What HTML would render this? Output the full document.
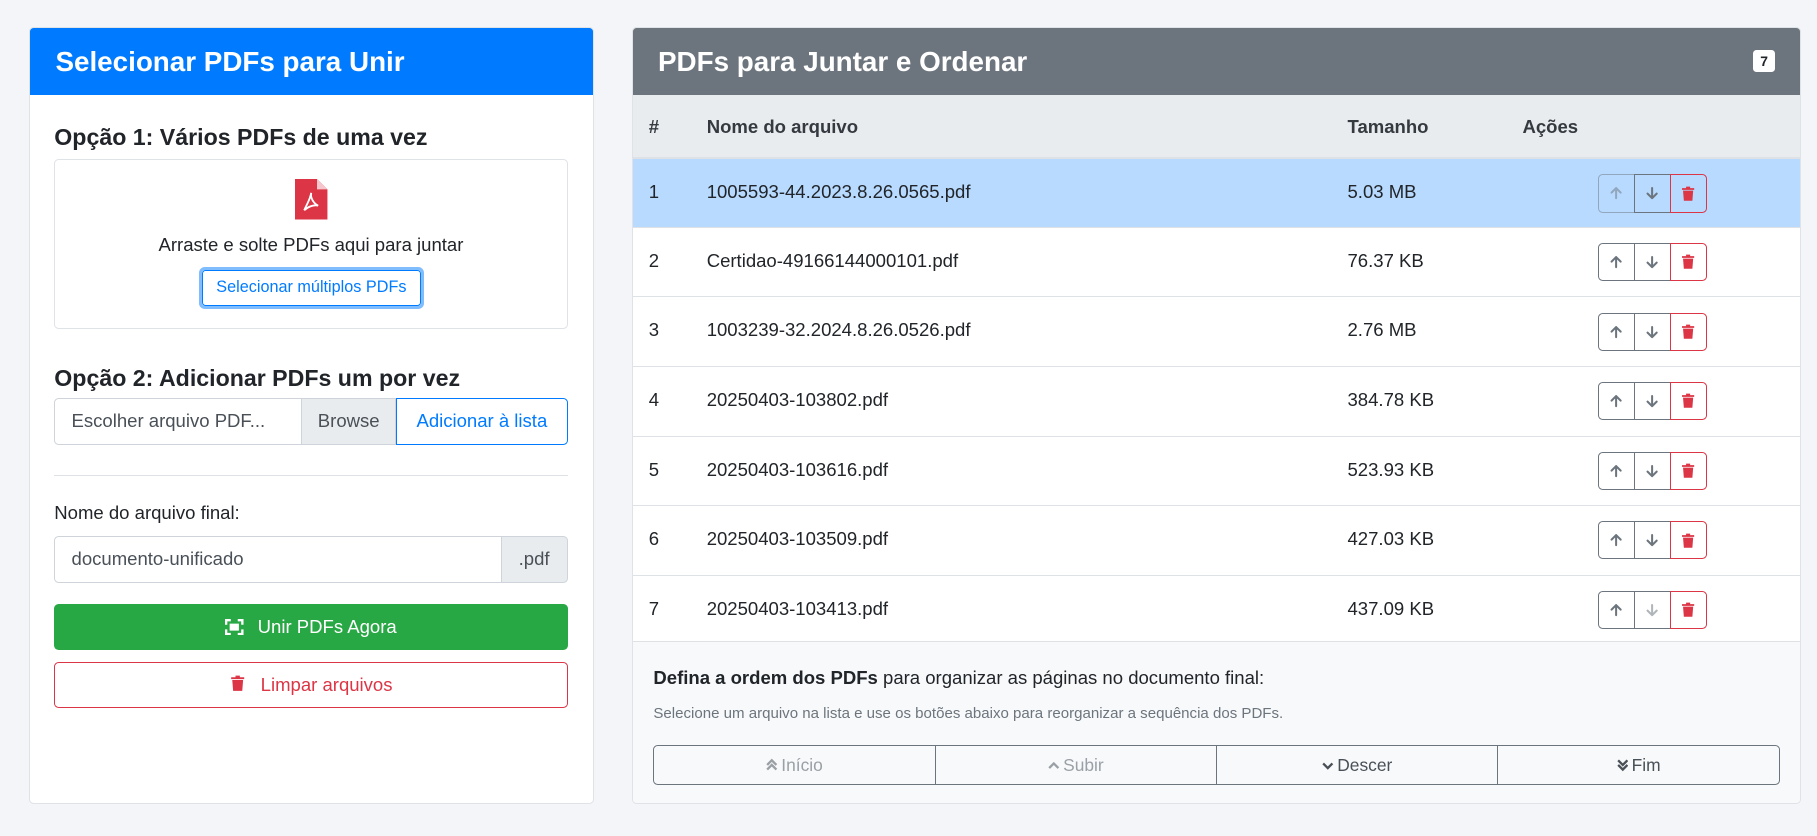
<!DOCTYPE html>
<html><head><meta charset="utf-8"><style>
*{box-sizing:border-box;margin:0;padding:0}
body{width:1817px;height:836px;background:#f4f5f8;font-family:"Liberation Sans",sans-serif;color:#212529;font-size:16px;overflow:hidden}
#w{position:relative;width:1568px;height:721px;zoom:1.1588}
.card{position:absolute;background:#fff;border:1px solid #dfe2e6;border-radius:4px;overflow:hidden}
.hd{height:58px;color:#fff;font-size:24px;font-weight:bold;padding:0 22px;line-height:58px}
.abs{position:absolute}
h5{position:absolute;font-size:20px;font-weight:bold;color:#212529;left:21px}
.ig{position:absolute;display:flex;height:40px;border-radius:4px}
.row{position:absolute;left:0;width:1008px;height:60px;border-top:1px solid #dee2e6;font-size:16px}
.row span{position:absolute;top:19px}
.bg{position:absolute;left:834px;top:13px;display:flex}
.bg div{width:32px;height:33px;border:1px solid #6c757d;display:flex;align-items:center;justify-content:center;margin-left:-1px}
.bg div:first-child{border-radius:4px 0 0 4px}
.bg div:last-child{border:1px solid #dc3545;border-radius:0 4px 4px 0}
.fb{display:flex;position:absolute;left:18px;top:89px;width:972px;height:35px;border:1px solid #6c757d;border-radius:4px}
.fb div{flex:1;border-left:1px solid #6c757d;text-align:center;line-height:33px;color:#495057;font-size:15px}
.fb div:first-child{border-left:none}
.fb svg{vertical-align:-1px;margin-right:3px}
</style></head><body><div id="w">
<svg width="0" height="0" style="position:absolute"><defs>
<symbol id="up" viewBox="0 0 16 16"><path d="M8 13V3M3.5 7.5L8 3l4.5 4.5" fill="none" stroke-width="2" stroke-linecap="round" stroke-linejoin="round"/></symbol>
<symbol id="dn" viewBox="0 0 16 16"><path d="M8 3v10M3.5 8.5L8 13l4.5-4.5" fill="none" stroke-width="2" stroke-linecap="round" stroke-linejoin="round"/></symbol>
<symbol id="tr" viewBox="0 0 16 16"><path d="M2 2.5h12v1.7H2zM6 1h4v1.5H6zM3 5h10l-.8 10H3.8z" fill="#dc3545"/></symbol>
</defs></svg>

<div class="card" style="left:25px;top:23px;width:488px;height:671px">
<div class="hd" style="background:#007bff">Selecionar PDFs para Unir</div>
<h5 style="top:83px">Opção 1: Vários PDFs de uma vez</h5>
<div class="abs" style="left:21px;top:113px;width:443px;height:147px;border:1px solid #dfe2e6;border-radius:4px">
<svg class="abs" style="left:207px;top:17px" width="28" height="35" viewBox="0 0 28 35"><path d="M0 0h19l9 9v26H0z" fill="#dc3545"/><path d="M19 0v9h9" fill="#f5c6cb"/><path d="M14 12c-1 4 2 9 6 11-4-1-9 1-12 4 2-5 5-9 6-15z" fill="none" stroke="#fff" stroke-width="1.6"/></svg>
<div class="abs" style="left:0;width:100%;top:64px;text-align:center;font-size:16px">Arraste e solte PDFs aqui para juntar</div>
<div class="abs" style="left:124px;top:93px;width:194px;height:36px;border:3px solid #80bdff;border-radius:5px"><div style="border:1px solid #007bff;border-radius:3px;height:100%;color:#007bff;font-size:14px;text-align:center;line-height:28px">Selecionar múltiplos PDFs</div></div>
</div>
<h5 style="top:291px">Opção 2: Adicionar PDFs um por vez</h5>
<div class="ig" style="left:21px;top:320px;width:443px">
<div style="width:214px;border:1px solid #ced4da;border-radius:4px 0 0 4px;padding-left:14px;line-height:38px;color:#495057">Escolher arquivo PDF...</div>
<div style="width:81px;border:1px solid #ced4da;border-left:none;background:#e9ecef;line-height:38px;text-align:center;color:#495057">Browse</div>
<div style="width:148px;border:1px solid #007bff;border-radius:0 4px 4px 0;line-height:38px;text-align:center;color:#007bff">Adicionar à lista</div>
</div>
<div class="abs" style="left:21px;top:386px;width:443px;border-top:1px solid #dee2e6"></div>
<div class="abs" style="left:21px;top:409px">Nome do arquivo final:</div>
<div class="ig" style="left:21px;top:439px;width:443px">
<div style="flex:1;border:1px solid #ced4da;border-radius:4px 0 0 4px;padding-left:14px;line-height:38px;color:#495057">documento-unificado</div>
<div style="width:57px;border:1px solid #ced4da;border-left:none;border-radius:0 4px 4px 0;background:#e9ecef;line-height:38px;text-align:center;color:#495057">.pdf</div>
</div>
<div class="abs" style="left:21px;top:497px;width:443px;height:40px;background:#28a745;border-radius:4px;color:#fff;text-align:center;line-height:40px">
<svg width="16" height="14" style="vertical-align:-2px;margin-right:12px" viewBox="0 0 16 14"><path d="M0 0h5v2H2v3H0zM11 0h5v5h-2V2h-3zM0 9h2v3h3v2H0zM14 9h2v5h-5v-2h3zM4 4h8v6H4z" fill="#fff"/></svg>Unir PDFs Agora</div>
<div class="abs" style="left:21px;top:547px;width:443px;height:40px;border:1px solid #dc3545;border-radius:4px;color:#dc3545;text-align:center;line-height:38px">
<svg width="15" height="16" style="vertical-align:-2px;margin-right:12px"><use href="#tr"/></svg>Limpar arquivos</div>
</div>

<div class="card" style="left:545px;top:23px;width:1009px;height:671px">
<div class="hd" style="background:#6c757d">PDFs para Juntar e Ordenar</div>
<div class="abs" style="left:967px;top:19px;width:19px;height:19px;background:#fff;border-radius:3px;font-size:12px;font-weight:bold;text-align:center;line-height:19px">7</div>
<div class="abs" style="left:0;top:58px;width:1008px;height:54px;background:#e9ecef;font-weight:bold;color:#343a40">
<span class="abs" style="left:14px;top:18px">#</span><span class="abs" style="left:64px;top:18px">Nome do arquivo</span><span class="abs" style="left:617px;top:18px">Tamanho</span><span class="abs" style="left:768px;top:18px">Ações</span></div>

<div class="row" style="top:112px;background:#b8daff;border-top:2px solid #dee2e6"><span style="left:14px">1</span><span style="left:64px">1005593-44.2023.8.26.0565.pdf</span><span style="left:617px">5.03 MB</span>
<div class="bg"><div style="opacity:.5"><svg width="14" height="14" stroke="#6c757d"><use href="#up"/></svg></div><div><svg width="14" height="14" stroke="#6c757d"><use href="#dn"/></svg></div><div><svg width="14" height="15"><use href="#tr"/></svg></div></div></div>

<div class="row" style="top:172px"><span style="left:14px">2</span><span style="left:64px">Certidao-49166144000101.pdf</span><span style="left:617px">76.37 KB</span>
<div class="bg"><div><svg width="14" height="14" stroke="#6c757d"><use href="#up"/></svg></div><div><svg width="14" height="14" stroke="#6c757d"><use href="#dn"/></svg></div><div><svg width="14" height="15"><use href="#tr"/></svg></div></div></div>

<div class="row" style="top:232px"><span style="left:14px">3</span><span style="left:64px">1003239-32.2024.8.26.0526.pdf</span><span style="left:617px">2.76 MB</span>
<div class="bg"><div><svg width="14" height="14" stroke="#6c757d"><use href="#up"/></svg></div><div><svg width="14" height="14" stroke="#6c757d"><use href="#dn"/></svg></div><div><svg width="14" height="15"><use href="#tr"/></svg></div></div></div>

<div class="row" style="top:292px"><span style="left:14px">4</span><span style="left:64px">20250403-103802.pdf</span><span style="left:617px">384.78 KB</span>
<div class="bg"><div><svg width="14" height="14" stroke="#6c757d"><use href="#up"/></svg></div><div><svg width="14" height="14" stroke="#6c757d"><use href="#dn"/></svg></div><div><svg width="14" height="15"><use href="#tr"/></svg></div></div></div>

<div class="row" style="top:352px"><span style="left:14px">5</span><span style="left:64px">20250403-103616.pdf</span><span style="left:617px">523.93 KB</span>
<div class="bg"><div><svg width="14" height="14" stroke="#6c757d"><use href="#up"/></svg></div><div><svg width="14" height="14" stroke="#6c757d"><use href="#dn"/></svg></div><div><svg width="14" height="15"><use href="#tr"/></svg></div></div></div>

<div class="row" style="top:412px"><span style="left:14px">6</span><span style="left:64px">20250403-103509.pdf</span><span style="left:617px">427.03 KB</span>
<div class="bg"><div><svg width="14" height="14" stroke="#6c757d"><use href="#up"/></svg></div><div><svg width="14" height="14" stroke="#6c757d"><use href="#dn"/></svg></div><div><svg width="14" height="15"><use href="#tr"/></svg></div></div></div>

<div class="row" style="top:472px"><span style="left:14px">7</span><span style="left:64px">20250403-103413.pdf</span><span style="left:617px">437.09 KB</span>
<div class="bg"><div><svg width="14" height="14" stroke="#6c757d"><use href="#up"/></svg></div><div><svg width="14" height="14" stroke="#b0b5ba"><use href="#dn"/></svg></div><div><svg width="14" height="15"><use href="#tr"/></svg></div></div></div>

<div class="abs" style="left:0;top:529px;width:1008px;height:142px;background:#f8f9fa;border-top:1px solid #dee2e6">
<div class="abs" style="left:18px;top:22px;font-size:16px"><b>Defina a ordem dos PDFs</b> para organizar as páginas no documento final:</div>
<div class="abs" style="left:18px;top:55px;font-size:13px;color:#6c757d">Selecione um arquivo na lista e use os botões abaixo para reorganizar a sequência dos PDFs.</div>
<div class="fb">
<div style="color:#9aa0a6"><svg width="10" height="12" viewBox="0 0 10 12"><path d="M1 6l4-4 4 4M1 10l4-4 4 4" fill="none" stroke="#9aa0a6" stroke-width="2"/></svg>Início</div>
<div style="color:#9aa0a6"><svg width="10" height="10" viewBox="0 0 10 10"><path d="M1 7l4-4 4 4" fill="none" stroke="#9aa0a6" stroke-width="2"/></svg>Subir</div>
<div><svg width="10" height="10" viewBox="0 0 10 10"><path d="M1 3l4 4 4-4" fill="none" stroke="#495057" stroke-width="2"/></svg>Descer</div>
<div><svg width="10" height="12" viewBox="0 0 10 12"><path d="M1 2l4 4 4-4M1 6l4 4 4-4" fill="none" stroke="#495057" stroke-width="2"/></svg>Fim</div>
</div>
</div>
</div>
</div></body></html>
